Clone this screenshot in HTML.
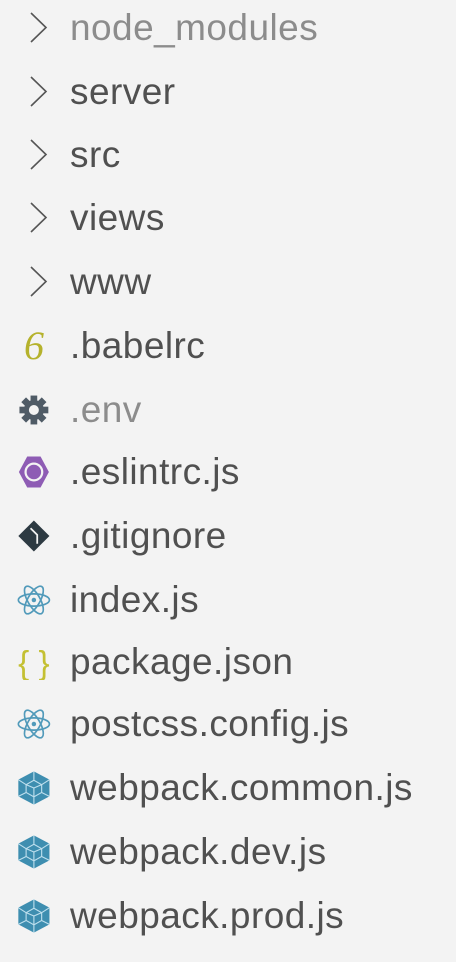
<!DOCTYPE html><html><head><style>
body{margin:0;width:456px;height:962px;background:#f3f3f3;font-family:"Liberation Sans",Arial,sans-serif;overflow:hidden;position:relative}
.r{position:absolute;left:0;height:40px;width:456px}
.t{position:absolute;left:70px;top:0px;line-height:40px;font-size:37px;color:#505050;white-space:nowrap;letter-spacing:0.45px}
.g{color:#8c8c8c}
svg{position:absolute;left:15px;top:2px;width:40px;height:36px}
svg.c{left:19px;top:3px;width:36px;height:32px}
</style></head><body>
<div class="r" style="top:8px"><svg class="c" viewBox="0 0 36 32"><path d="M12 2l15 14.5L12 31" fill="none" stroke="#555" stroke-width="1.6"/></svg><div class="t g">node_modules</div></div>
<div class="r" style="top:72px"><svg class="c" viewBox="0 0 36 32"><path d="M12 2l15 14.5L12 31" fill="none" stroke="#555" stroke-width="1.6"/></svg><div class="t">server</div></div>
<div class="r" style="top:135px"><svg class="c" viewBox="0 0 36 32"><path d="M12 2l15 14.5L12 31" fill="none" stroke="#555" stroke-width="1.6"/></svg><div class="t">src</div></div>
<div class="r" style="top:198px"><svg class="c" viewBox="0 0 36 32"><path d="M12 2l15 14.5L12 31" fill="none" stroke="#555" stroke-width="1.6"/></svg><div class="t">views</div></div>
<div class="r" style="top:262px"><svg class="c" viewBox="0 0 36 32"><path d="M12 2l15 14.5L12 31" fill="none" stroke="#555" stroke-width="1.6"/></svg><div class="t">www</div></div>
<div class="r" style="top:326px"><svg class="c" viewBox="0 0 36 32"><text x="15" y="30" font-size="40" text-anchor="middle" fill="#b5b22c" font-family="Liberation Serif" font-style="italic">6</text></svg><div class="t">.babelrc</div></div>
<div class="r" style="top:390px"><svg viewBox="0 0 36 32"><g fill="#4f5b66"><circle cx="17" cy="16" r="9"/><rect x="14" y="3" width="6" height="26"/><rect x="4" y="13" width="26" height="6"/><rect x="14" y="3" width="6" height="26" transform="rotate(45 17 16)"/><rect x="14" y="3" width="6" height="26" transform="rotate(-45 17 16)"/></g><circle cx="17" cy="16" r="4.5" fill="#f3f3f3"/></svg><div class="t g">.env</div></div>
<div class="r" style="top:452px"><svg viewBox="0 0 36 32"><polygon points="11,2 23,2 30.5,16 23,30 11,30 3.5,16" fill="#8e5cb4"/><circle cx="17" cy="16" r="8.5" fill="#f3f3f3"/><circle cx="17" cy="16" r="6.5" fill="#8e5cb4"/></svg><div class="t">.eslintrc.js</div></div>
<div class="r" style="top:516px"><svg viewBox="0 0 36 32"><polygon points="17,2 31,16 17,30 3,16" fill="#2d3a42"/><path d="M14 9l6 6v8" fill="none" stroke="#f3f3f3" stroke-width="1.6"/></svg><div class="t">.gitignore</div></div>
<div class="r" style="top:580px"><svg viewBox="0 0 36 32"><g fill="none" stroke="#519aba" stroke-width="1.5"><ellipse cx="17" cy="16" rx="14" ry="5.5"/><ellipse cx="17" cy="16" rx="14" ry="5.5" transform="rotate(60 17 16)"/><ellipse cx="17" cy="16" rx="14" ry="5.5" transform="rotate(-60 17 16)"/></g><circle cx="17" cy="16" r="2" fill="#519aba"/></svg><div class="t">index.js</div></div>
<div class="r" style="top:642px"><svg viewBox="0 0 36 32"><text x="17" y="27" font-size="30" text-anchor="middle" fill="#c4c033" font-family="Liberation Sans">{ }</text></svg><div class="t">package.json</div></div>
<div class="r" style="top:704px"><svg viewBox="0 0 36 32"><g fill="none" stroke="#519aba" stroke-width="1.5"><ellipse cx="17" cy="16" rx="14" ry="5.5"/><ellipse cx="17" cy="16" rx="14" ry="5.5" transform="rotate(60 17 16)"/><ellipse cx="17" cy="16" rx="14" ry="5.5" transform="rotate(-60 17 16)"/></g><circle cx="17" cy="16" r="2" fill="#519aba"/></svg><div class="t">postcss.config.js</div></div>
<div class="r" style="top:768px"><svg viewBox="0 0 36 32"><polygon points="17,1 31,8.5 31,23.5 17,31 3,23.5 3,8.5" fill="#3e8eb0"/><path d="M17 9l7 4v7l-7 4-7-4v-7zM17 16v8M17 16l7-3M17 16l-7-3M17 1v8M31 8.5l-7 4.5M3 8.5l7 4.5M3 23.5l7-3.5M31 23.5l-7-3.5M17 31v-7" fill="none" stroke="#bfe0ee" stroke-width="1"/></svg><div class="t">webpack.common.js</div></div>
<div class="r" style="top:832px"><svg viewBox="0 0 36 32"><polygon points="17,1 31,8.5 31,23.5 17,31 3,23.5 3,8.5" fill="#3e8eb0"/><path d="M17 9l7 4v7l-7 4-7-4v-7zM17 16v8M17 16l7-3M17 16l-7-3M17 1v8M31 8.5l-7 4.5M3 8.5l7 4.5M3 23.5l7-3.5M31 23.5l-7-3.5M17 31v-7" fill="none" stroke="#bfe0ee" stroke-width="1"/></svg><div class="t">webpack.dev.js</div></div>
<div class="r" style="top:896px"><svg viewBox="0 0 36 32"><polygon points="17,1 31,8.5 31,23.5 17,31 3,23.5 3,8.5" fill="#3e8eb0"/><path d="M17 9l7 4v7l-7 4-7-4v-7zM17 16v8M17 16l7-3M17 16l-7-3M17 1v8M31 8.5l-7 4.5M3 8.5l7 4.5M3 23.5l7-3.5M31 23.5l-7-3.5M17 31v-7" fill="none" stroke="#bfe0ee" stroke-width="1"/></svg><div class="t">webpack.prod.js</div></div>
</body></html>
